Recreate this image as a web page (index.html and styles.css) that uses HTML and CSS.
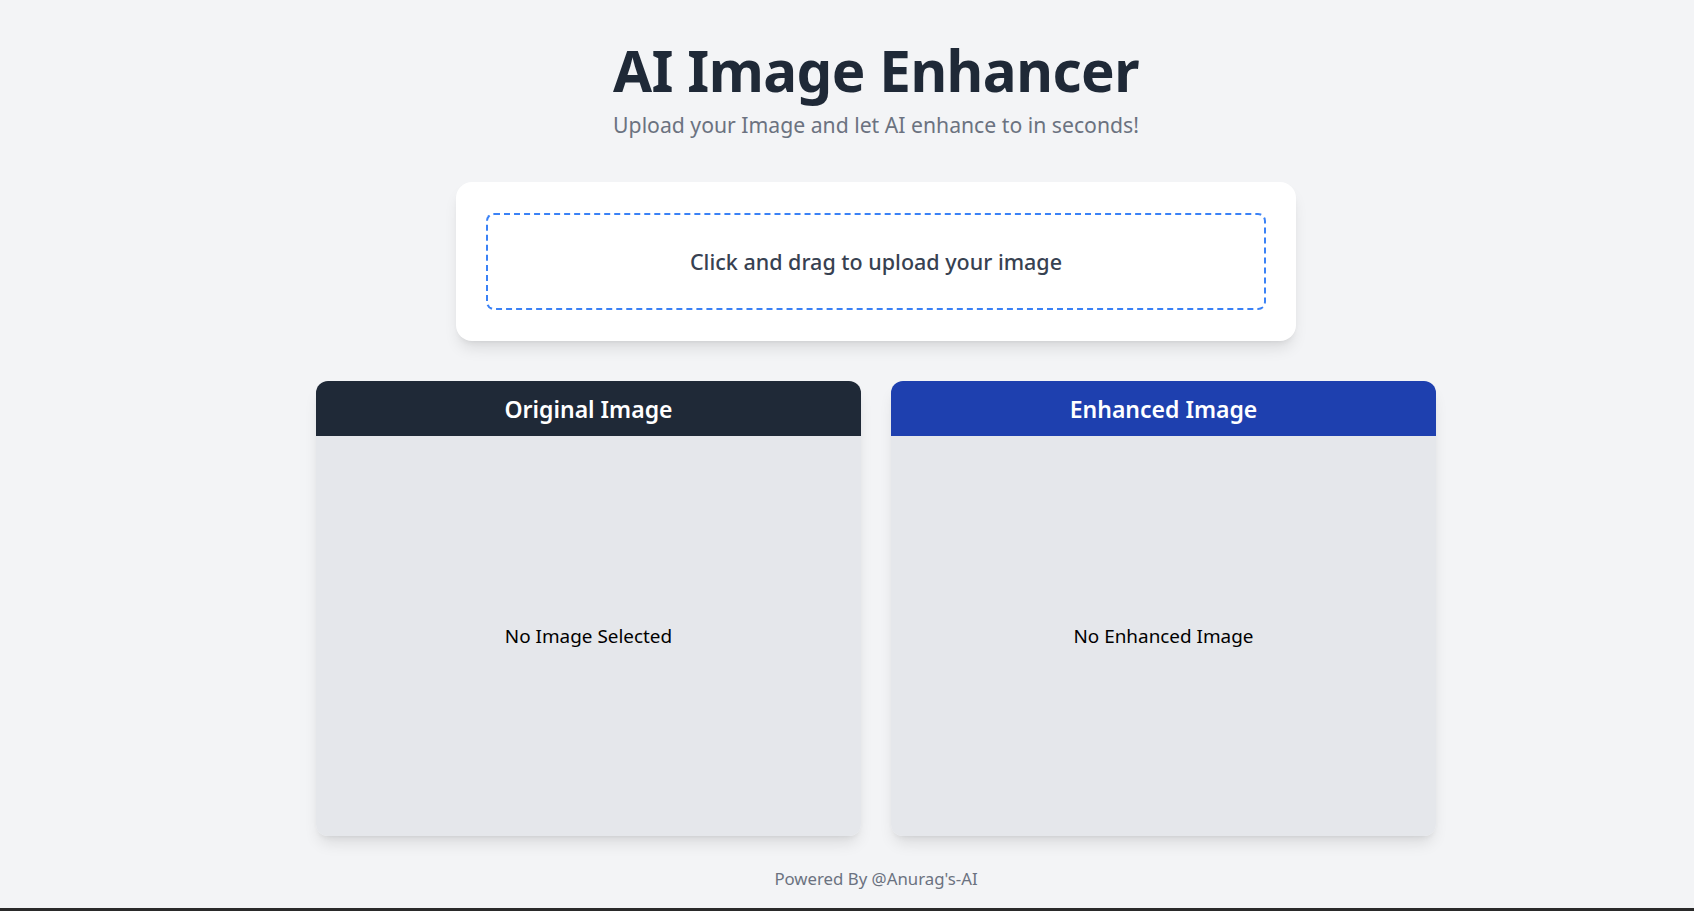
FILE: index.html
```html
<!DOCTYPE html>
<html lang="en">
<head>
<meta charset="utf-8">
<title>AI Image Enhancer</title>
<link rel="stylesheet" href="styles.css">
</head>
<body>
<div class="page">
  <main class="main">
    <header class="hero">
      <h1 class="title">AI Image Enhancer</h1>
      <p class="subtitle">Upload your Image and let AI enhance to in seconds!</p>
    </header>
    <section class="upload-card">
      <label class="dropzone">
        <span class="dropzone-text">Click and drag to upload your image</span>
      </label>
    </section>
    <section class="panels">
      <div class="panel">
        <div class="panel-head panel-head-dark">Original Image</div>
        <div class="panel-body">No Image Selected</div>
      </div>
      <div class="panel">
        <div class="panel-head panel-head-blue">Enhanced Image</div>
        <div class="panel-body">No Enhanced Image</div>
      </div>
    </section>
    <footer class="footer">Powered By @Anurag's-AI</footer>
  </main>
  <div class="bottom-strip"></div>
</div>
</body>
</html>
```
FILE: styles.css
```css
* { box-sizing: border-box; }
html, body { margin: 0; padding: 0; }
body {
  background: #f3f4f6;
  font-family: "Noto Sans", "Open Sans", sans-serif;
  overflow: hidden;
}
.page {
  height: 911px;
  display: flex;
  flex-direction: column;
}
.main {
  flex: 1;
  display: flex;
  flex-direction: column;
  align-items: center;
  padding-left: 58px;
  padding-top: 41px;
}
.hero { text-align: center; }
.title {
  margin: 0;
  font-size: 56.5px;
  line-height: 60px;
  font-weight: 700;
  color: #1f2937;
  letter-spacing: -0.5px;
}
.subtitle {
  margin: 10px 0 0;
  font-size: 21.2px;
  line-height: 28px;
  color: #6b7280;
}
.upload-card {
  margin-top: 43px;
  width: 840px;
  background: #ffffff;
  border-radius: 16px;
  padding: 31px 30px;
  box-shadow: 0 10px 15px -3px rgba(0,0,0,0.1), 0 4px 6px -4px rgba(0,0,0,0.1);
}
.dropzone {
  display: flex;
  align-items: center;
  justify-content: center;
  height: 97px;
  border: 2px dashed #3b82f6;
  border-radius: 8px;
  cursor: pointer;
}
.dropzone-text {
  font-size: 21.5px;
  font-weight: 500;
  color: #374151;
}
.panels {
  margin-top: 40px;
  display: flex;
  gap: 30px;
}
.panel {
  width: 545px;
  border-radius: 12px;
  overflow: hidden;
  box-shadow: 0 10px 15px -3px rgba(0,0,0,0.1), 0 4px 6px -4px rgba(0,0,0,0.1);
}
.panel-head {
  height: 55px;
  display: flex;
  align-items: center;
  justify-content: center;
  color: #ffffff;
  font-size: 23px;
  font-weight: 600;
}
.panel-head-dark { background: #1f2937; }
.panel-head-blue { background: #1e40af; }
.panel-body {
  height: 400px;
  background: #e5e7eb;
  display: flex;
  align-items: center;
  justify-content: center;
  font-size: 18.9px;
  color: #000000;
}
.footer {
  margin-top: 31px;
  font-size: 16.8px;
  line-height: 24px;
  color: #6b7280;
}
.bottom-strip {
  height: 3px;
  background: #2a2a2a;
}
```
